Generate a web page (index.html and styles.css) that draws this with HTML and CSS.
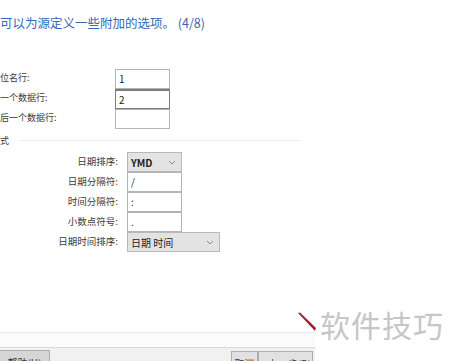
FILE: index.html
```html
<!DOCTYPE html>
<html lang="zh-CN">
<head>
    <meta charset="UTF-8">
    <title>文本导入向导</title>
    <link rel="stylesheet" href="styles.css">
</head>
<body>
    <div class="wizard">
        <p class="intro">可以为源定义一些附加的选项。 (4/8)</p>

        <div class="fields">
            <span class="label">位名行:</span>
            <div class="box">1</div>
            <span class="label">一个数据行:</span>
            <div class="box active">2</div>
            <span class="label">后一个数据行:</span>
            <div class="box"></div>
        </div>

        <div class="group-title"><span>式</span></div>

        <div class="format">
            <span class="flabel">日期排序:</span>
            <div class="select short"><b>YMD</b>
                <svg width="8" height="5" viewBox="0 0 8 5"><path d="M1 1 L4 4 L7 1" fill="none" stroke="#8a8a8a" stroke-width="1"/></svg>
            </div>
            <span class="flabel">日期分隔符:</span>
            <div class="box short">/</div>
            <span class="flabel">时间分隔符:</span>
            <div class="box short">:</div>
            <span class="flabel">小数点符号:</span>
            <div class="box short">.</div>
            <span class="flabel">日期时间排序:</span>
            <div class="select wide"><span>日期 时间</span>
                <svg width="8" height="5" viewBox="0 0 8 5"><path d="M1 1 L4 4 L7 1" fill="none" stroke="#8a8a8a" stroke-width="1"/></svg>
            </div>
        </div>

        <div class="footer">
            <div class="footer-band"></div>
            <div class="button-bar">
                <button class="btn help">帮助(H)</button>
                <div class="nav">
                    <button class="btn small">取消</button>
                    <button class="btn back">&lt; 上一步(B)</button>
                </div>
            </div>
        </div>
    </div>

    <div class="watermark">
        <svg class="pointer" width="22" height="22" viewBox="0 0 22 22"><path d="M1 1 L3 0.5 L19 16 L18 19 Z" fill="#a3202e"/></svg>
        <span>软件技巧</span>
    </div>
</body>
</html>
```

FILE: styles.css
```css
html, body {
    margin: 0;
    padding: 0;
    width: 450px;
    height: 361px;
    overflow: hidden;
}

body {
    font-family: "Noto Sans CJK SC", "Liberation Sans", sans-serif;
    background-color: #fff;
    color: #3a3a3a;
    position: relative;
}

.wizard {
    height: 361px;
    display: flex;
    flex-direction: column;
}

.intro {
    margin: 15px 0 0;
    font-size: 12.5px;
    line-height: 16px;
    color: #3468b4;
}

.fields {
    margin-top: 38px;
    display: grid;
    grid-template-columns: 115px 55px;
    grid-auto-rows: 20px;
    align-items: center;
}

.label,
.flabel {
    font-size: 9px;
    line-height: 12px;
    margin-top: -3px;
}

.flabel {
    justify-self: end;
    margin-top: -2px;
    font-size: 9.5px;
}

.box {
    box-sizing: border-box;
    height: 20px;
    border: 1px solid #b4b4b4;
    background-color: #fff;
    font-size: 10px;
    line-height: 18px;
    padding: 0 3px;
    color: #222;
}

.box.active {
    border-color: #7c7c7c;
    border-top-width: 2px;
    line-height: 17px;
}

.short {
    width: 55px;
}

.group-title {
    height: 23px;
    display: flex;
    align-items: center;
    font-size: 9px;
    width: 300px;
}

.group-title::after {
    content: "";
    flex-grow: 1;
    height: 1px;
    margin-left: 10px;
    background-color: #ebebeb;
}

.format {
    display: grid;
    grid-template-columns: 118px auto;
    column-gap: 9px;
    grid-auto-rows: 20px;
    align-items: center;
    justify-items: start;
}

.select {
    box-sizing: border-box;
    height: 20px;
    border: 1px solid #b8b8b8;
    background-color: #e3e3e3;
    display: flex;
    align-items: center;
    justify-content: space-between;
    padding: 0 5px 0 3px;
    font-size: 10px;
    color: #222;
}

.select b {
    font-weight: 600;
}

.select.wide {
    width: 93px;
}

.footer {
    margin-top: auto;
    height: 29px;
    border-top: 1px solid #e9e9e9;
    box-sizing: border-box;
}

.footer-band {
    height: 14px;
    background-color: #fbfbfb;
    border-bottom: 1px solid #dadada;
}

.button-bar {
    height: 13px;
    background-color: #f1f1f1;
    display: flex;
    justify-content: space-between;
    padding-top: 3px;
    overflow: visible;
}

.nav {
    display: flex;
    margin-right: 137px;
}

.btn {
    height: 20px;
    border: 1px solid #adadad;
    background-color: #e1e1e1;
    font-family: "Noto Sans CJK SC", sans-serif;
    font-size: 10px;
    line-height: 24px;
    padding: 0;
    color: #333;
    margin: 0;
    overflow: hidden;
}

.btn.help {
    width: 50px;
    background-color: #d6d6d6;
    margin-top: -1px;
    border-left: none;
}

.btn.small {
    width: 27px;
}

.btn.back {
    width: 55px;
}

.watermark {
    position: absolute;
    left: 315px;
    top: 300px;
    width: 135px;
    height: 61px;
    background-color: #fff;
}

.watermark span {
    position: absolute;
    left: 5px;
    top: 4px;
    font-size: 30px;
    line-height: 40px;
    letter-spacing: 1px;
    color: #c6c6c6;
    white-space: nowrap;
}

.pointer {
    position: absolute;
    left: -18px;
    top: 12px;
}
```
